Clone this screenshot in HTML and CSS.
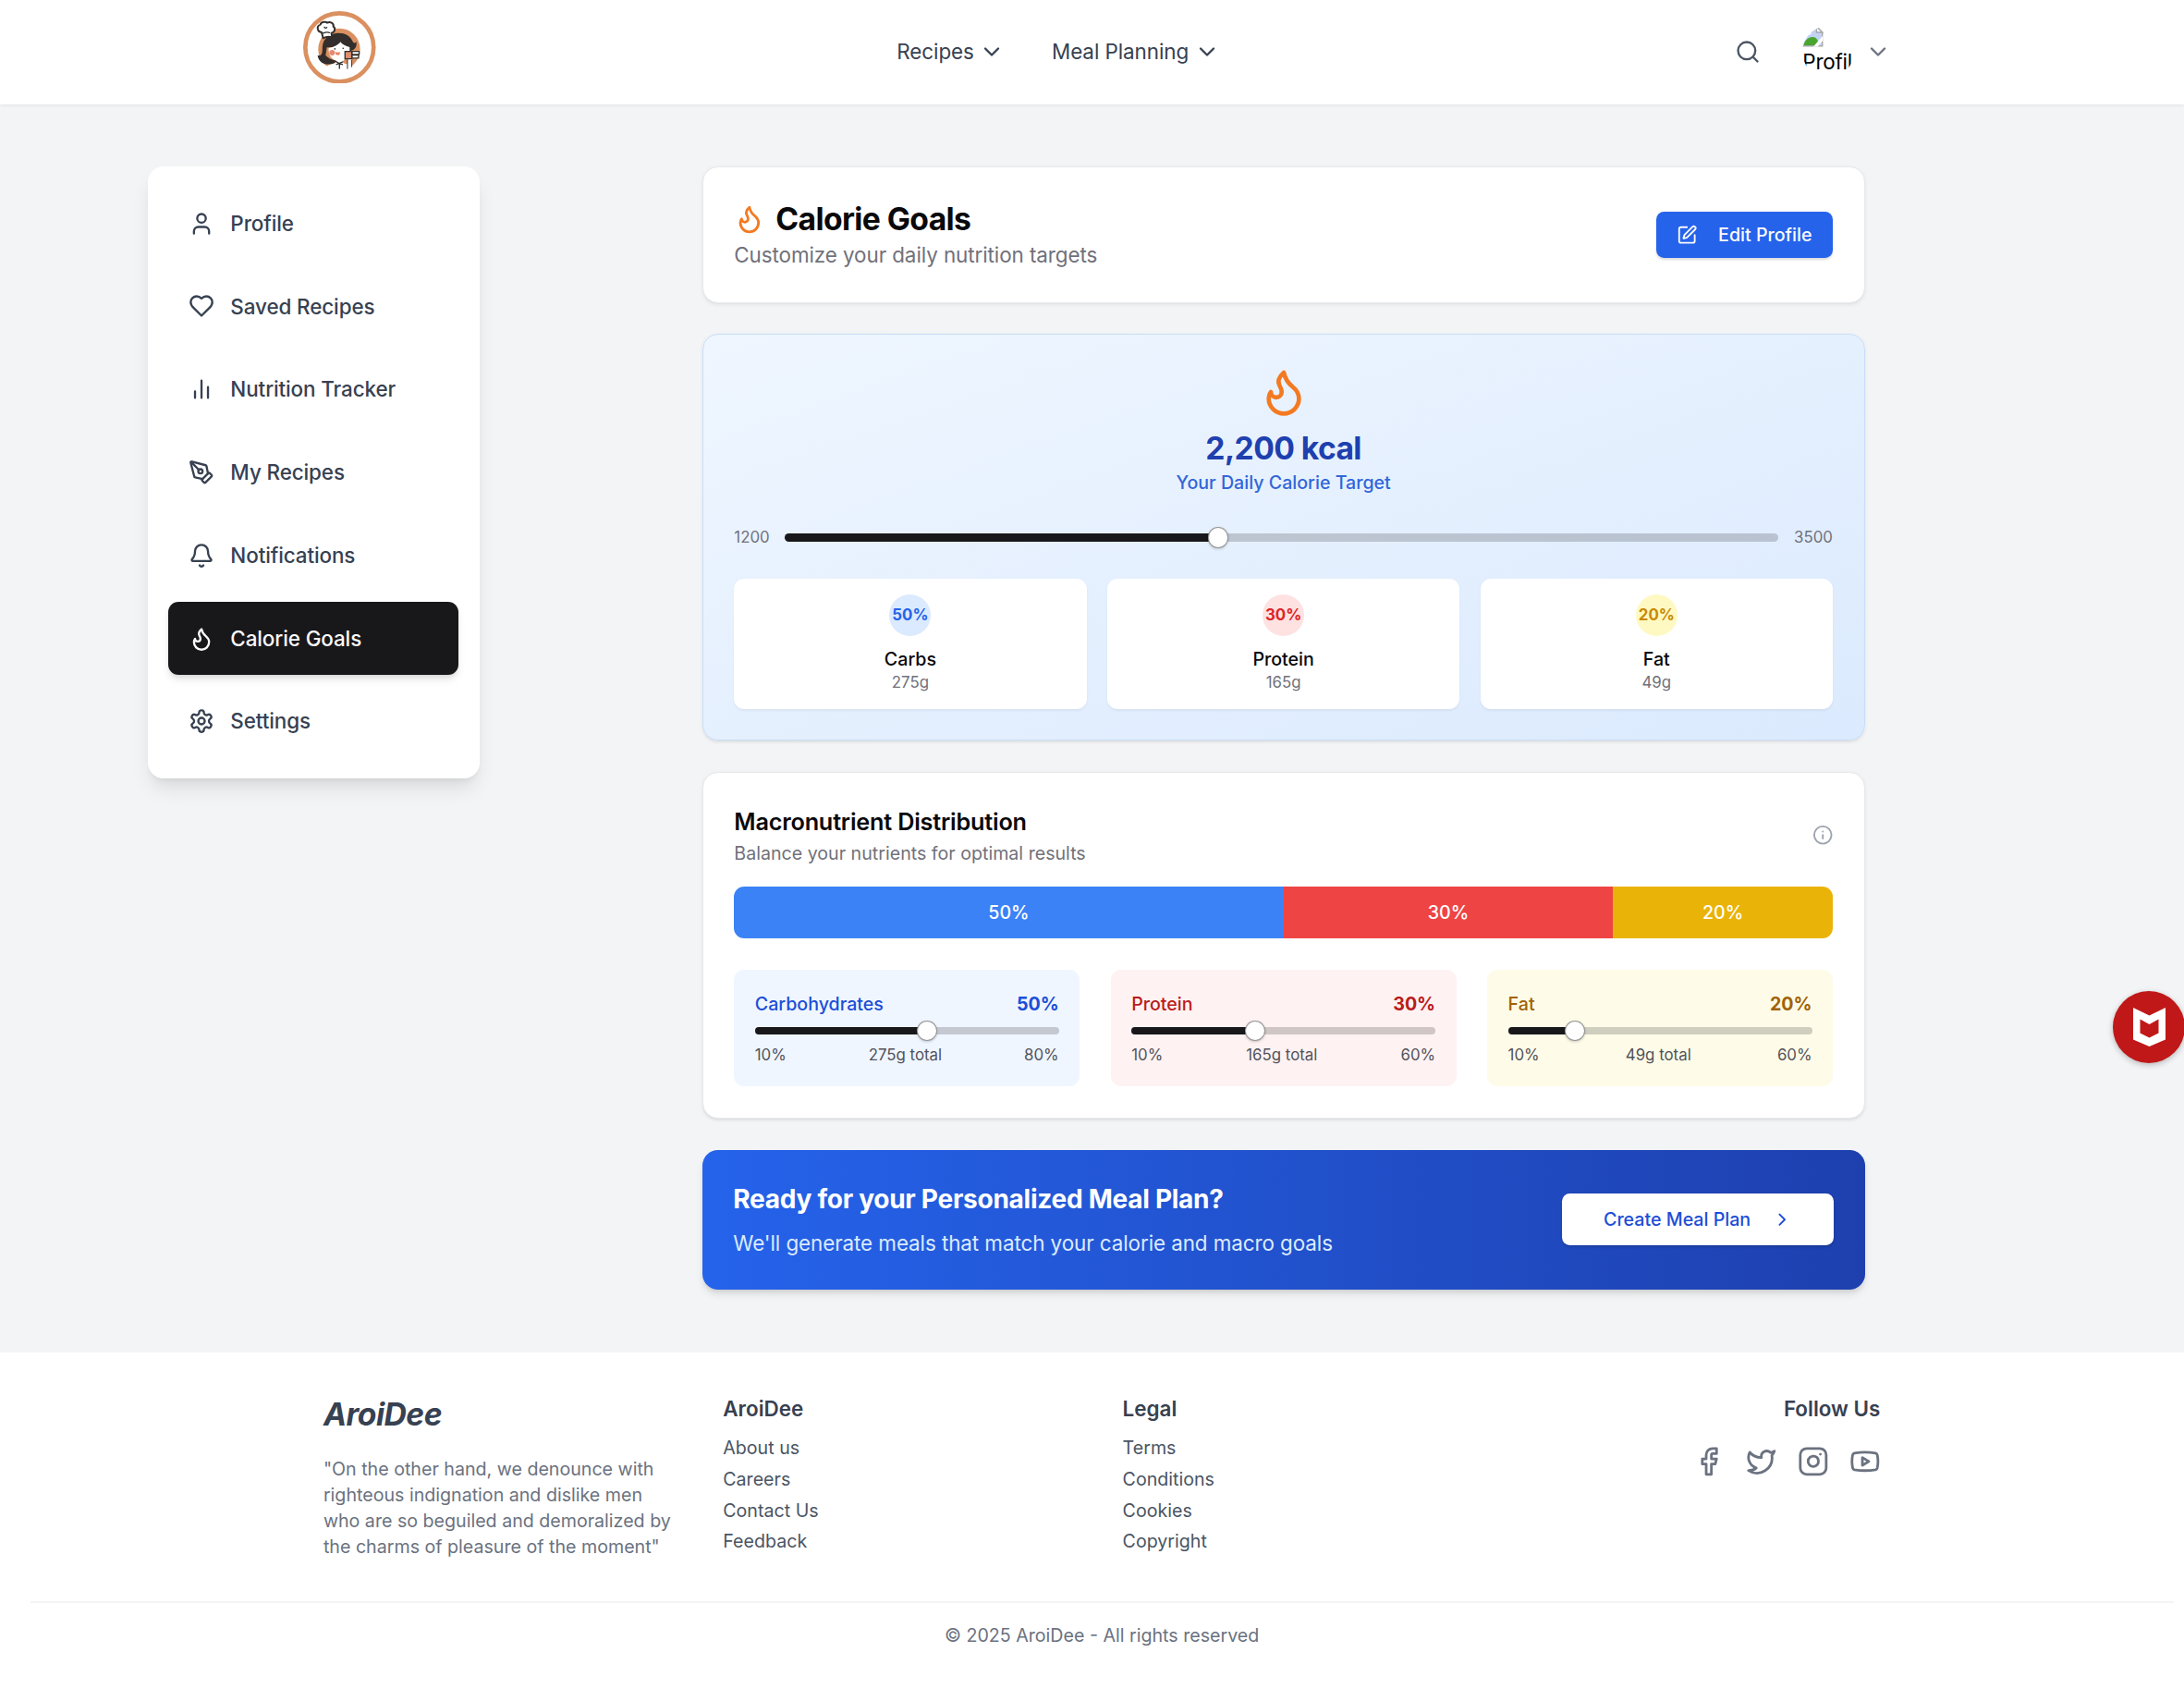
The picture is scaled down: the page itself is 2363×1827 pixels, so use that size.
FILE: index.html
```html
<!DOCTYPE html>
<html lang="en">
<head>
<meta charset="utf-8">
<title>AroiDee - Calorie Goals</title>
<link rel="stylesheet" href="styles.css">
</head>
<body>
<svg class="sprite" aria-hidden="true">
  <symbol id="i-flame" viewBox="0 0 24 24"><path d="M8.5 14.5A2.5 2.5 0 0 0 11 12c0-1.38-.5-2-1-3-1.072-2.143-.224-4.054 2-6 .5 2.5 2 4.9 4 6.5 2 1.6 3 3.5 3 5.5a7 7 0 1 1-14 0c0-1.153.433-2.294 1-3a2.5 2.5 0 0 0 2.5 2.5z"/></symbol>
  <symbol id="i-down" viewBox="0 0 24 24"><path d="m6 9 6 6 6-6"/></symbol>
</svg>

<header class="topbar">
  <div class="topbar-inner">
    <a class="logo" href="#">
      <svg class="logo-img" viewBox="85 36 236 236">
        <circle cx="203" cy="154" r="111" fill="#fff"/>
        <circle cx="202" cy="160" r="68" fill="#da9060"/>
        <path d="M134 224h136v20H134z" fill="#fff"/>
        <path d="M158 222c6-12 22-18 44-18s36 6 42 20c-20 12-66 12-86-2z" fill="#fff"/>
        <path d="M150 140c6-20 26-32 50-33 22 0 38 10 45 26 4 8 8 9 13 2 2 16-4 26-16 29l-6 10-14-20-60 0-4 26c8 8 18 14 32 16l-2 8c-26 12-52 2-56-24 9 2 14-2 15-12 1-12 0-19 3-28z" fill="#332e2b"/>
        <path d="M168 156c16-3 32-10 38-20 6 9 18 14 30 17 2 26-8 45-34 45-22 0-36-18-34-42z" fill="#fff"/>
        <path d="M192 194h24l2 12-14 10-14-10z" fill="#fff"/>
        <path d="M188 198l14 8 14-6M203 206v18M192 210l10-4 12 4" fill="none" stroke="#332e2b" stroke-width="4"/>
        <circle cx="179" cy="171" r="9" fill="#e48a72"/>
        <path d="M189 168q8 4 16 1q0 11-7 10q-9 0-9-11z" fill="#e9825f"/>
        <circle cx="188" cy="159" r="2.500" fill="#332e2b"/><circle cx="215" cy="157" r="2.500" fill="#332e2b"/>
        <path d="M230 192l14-2 1 36-18 2z" fill="#fff"/>
        <path d="M229 194v30M243 194v24" fill="none" stroke="#332e2b" stroke-width="3"/>
        <path d="M221 167h22v24h-22z" fill="#dd8e70" stroke="#332e2b" stroke-width="4"/>
        <path d="M244 167h23v10h-23zM244 179h21v10h-21z" fill="#fff" stroke="#332e2b" stroke-width="4" stroke-linejoin="round"/>
        <path d="M150 124l-5-19c-14-1-18-20-4-25 2-10 18-11 22-6 9-5 23 1 20 12 9 6 4 20-6 21l2 14q-16-4-29 3z" fill="#fff" stroke="#332e2b" stroke-width="6" stroke-linejoin="round"/>
        <path d="M150 108q11-5 21-2M154 88q4 6 8 1" fill="none" stroke="#332e2b" stroke-width="4" stroke-linecap="round"/>
        <circle cx="203" cy="154" r="111" fill="none" stroke="#da9060" stroke-width="14"/>
      </svg>
    </a>
    <nav class="mainnav">
      <a href="#">Recipes <svg class="icon"><use href="#i-down"/></svg></a>
      <a href="#">Meal Planning <svg class="icon"><use href="#i-down"/></svg></a>
    </nav>
    <div class="account">
      <svg class="icon search" viewBox="0 0 24 24"><circle cx="11" cy="11" r="8"/><path d="m21 21-4.300-4.300"/></svg>
      <div class="avatar">
        <svg class="broken" viewBox="0 0 16 16"><path d="M.5.5h10.500l4.500 4.500v10.500h-15z" fill="#c3d3f5" stroke="#a8a8a8"/><path d="M11 .5V5h4.500z" fill="#fff" stroke="#a8a8a8"/><circle cx="5" cy="5" r="2" fill="#fff"/><path d="M1 15c1-4.500 4-6.500 7-6.500 2 0 3.500 1.500 4 3V15z" fill="#4aa52f"/><path d="M8.500 16L16 7.500v3.500l-4 5z" fill="#fff"/></svg>
        <span>Profile</span>
      </div>
      <svg class="icon"><use href="#i-down"/></svg>
    </div>
  </div>
</header>

<div class="page">
  <div class="page-inner">
    <aside class="sidebar">
      <a href="#"><svg class="icon" viewBox="0 0 24 24"><path d="M19 21v-2a4 4 0 0 0-4-4H9a4 4 0 0 0-4 4v2"/><circle cx="12" cy="7" r="4"/></svg>Profile</a>
      <a href="#"><svg class="icon" viewBox="0 0 24 24"><path d="M19 14c1.490-1.460 3-3.210 3-5.500A5.500 5.500 0 0 0 16.500 3c-1.760 0-3 .5-4.500 2-1.500-1.500-2.740-2-4.500-2A5.500 5.500 0 0 0 2 8.500c0 2.300 1.500 4.050 3 5.500l7 7Z"/></svg>Saved Recipes</a>
      <a href="#"><svg class="icon" viewBox="0 0 24 24"><path d="M18 20V10M12 20V4M6 20v-6"/></svg>Nutrition Tracker</a>
      <a href="#"><svg class="icon" viewBox="0 0 24 24"><path d="M15.707 21.293a1 1 0 0 1-1.414 0l-1.586-1.586a1 1 0 0 1 0-1.414l5.586-5.586a1 1 0 0 1 1.414 0l1.586 1.586a1 1 0 0 1 0 1.414z"/><path d="m18 13-1.375-6.874a1 1 0 0 0-.746-.776L3.235 2.028a1 1 0 0 0-1.207 1.207L5.350 15.879a1 1 0 0 0 .776.746L13 18"/><path d="m2.300 2.300 7.286 7.286"/><circle cx="11" cy="11" r="2"/></svg>My Recipes</a>
      <a href="#"><svg class="icon" viewBox="0 0 24 24"><path d="M10.268 21a2 2 0 0 0 3.464 0"/><path d="M3.262 15.326A1 1 0 0 0 4 17h16a1 1 0 0 0 .74-1.673C19.410 13.956 18 12.499 18 8A6 6 0 0 0 6 8c0 4.499-1.411 5.956-2.738 7.326"/></svg>Notifications</a>
      <a href="#" class="active"><svg class="icon"><use href="#i-flame"/></svg>Calorie Goals</a>
      <a href="#"><svg class="icon" viewBox="0 0 24 24"><path d="M12.220 2h-.44a2 2 0 0 0-2 2v.18a2 2 0 0 1-1 1.730l-.43.25a2 2 0 0 1-2 0l-.15-.08a2 2 0 0 0-2.730.73l-.22.38a2 2 0 0 0 .73 2.730l.15.1a2 2 0 0 1 1 1.720v.51a2 2 0 0 1-1 1.740l-.15.09a2 2 0 0 0-.73 2.730l.22.38a2 2 0 0 0 2.730.73l.15-.08a2 2 0 0 1 2 0l.43.25a2 2 0 0 1 1 1.730V20a2 2 0 0 0 2 2h.44a2 2 0 0 0 2-2v-.18a2 2 0 0 1 1-1.730l.43-.25a2 2 0 0 1 2 0l.15.08a2 2 0 0 0 2.730-.73l.22-.39a2 2 0 0 0-.73-2.730l-.15-.08a2 2 0 0 1-1-1.740v-.5a2 2 0 0 1 1-1.740l.15-.09a2 2 0 0 0 .73-2.730l-.22-.38a2 2 0 0 0-2.730-.73l-.15.08a2 2 0 0 1-2 0l-.43-.25a2 2 0 0 1-1-1.730V4a2 2 0 0 0-2-2z"/><circle cx="12" cy="12" r="3"/></svg>Settings</a>
    </aside>

    <main class="content">
      <section class="card headcard">
        <div>
          <h1><svg class="icon flame"><use href="#i-flame"/></svg>Calorie Goals</h1>
          <p>Customize your daily nutrition targets</p>
        </div>
        <button class="btn btn-primary"><svg class="icon" viewBox="0 0 24 24"><path d="M12 3H5a2 2 0 0 0-2 2v14a2 2 0 0 0 2 2h14a2 2 0 0 0 2-2v-7"/><path d="M18.375 2.625a1 1 0 0 1 3 3l-9.013 9.014a2 2 0 0 1-.853.505l-2.873.84a.5.5 0 0 1-.62-.62l.84-2.873a2 2 0 0 1 .506-.852z"/></svg>Edit Profile</button>
      </section>

      <section class="card target">
        <svg class="icon flame big"><use href="#i-flame"/></svg>
        <div class="kcal">2,200 kcal</div>
        <div class="kcal-sub">Your Daily Calorie Target</div>
        <div class="range">
          <span>1200</span>
          <div class="slider" style="--p:.43478"><i class="fill"></i><i class="thumb"></i></div>
          <span>3500</span>
        </div>
        <div class="macros">
          <div class="macro"><b class="c-blue">50%</b><strong>Carbs</strong><small>275g</small></div>
          <div class="macro"><b class="c-red">30%</b><strong>Protein</strong><small>165g</small></div>
          <div class="macro"><b class="c-yellow">20%</b><strong>Fat</strong><small>49g</small></div>
        </div>
      </section>

      <section class="card dist">
        <div class="dist-head">
          <div><h2>Macronutrient Distribution</h2><p>Balance your nutrients for optimal results</p></div>
          <svg class="icon" viewBox="0 0 24 24"><circle cx="12" cy="12" r="10"/><path d="M12 16v-4M12 8h.01"/></svg>
        </div>
        <div class="bar">
          <div class="seg-blue" style="width:50%">50%</div><div class="seg-red" style="width:30%">30%</div><div class="seg-yellow" style="width:20%">20%</div>
        </div>
        <div class="boxes">
          <div class="box box-blue">
            <div class="row label"><span>Carbohydrates</span><b>50%</b></div>
            <div class="slider" style="--p:.5714"><i class="fill"></i><i class="thumb"></i></div>
            <div class="row ends"><span>10%</span><span>275g total</span><span>80%</span></div>
          </div>
          <div class="box box-red">
            <div class="row label"><span>Protein</span><b>30%</b></div>
            <div class="slider" style="--p:.4"><i class="fill"></i><i class="thumb"></i></div>
            <div class="row ends"><span>10%</span><span>165g total</span><span>60%</span></div>
          </div>
          <div class="box box-yellow">
            <div class="row label"><span>Fat</span><b>20%</b></div>
            <div class="slider" style="--p:.2"><i class="fill"></i><i class="thumb"></i></div>
            <div class="row ends"><span>10%</span><span>49g total</span><span>60%</span></div>
          </div>
        </div>
      </section>

      <section class="banner">
        <div><h3>Ready for your Personalized Meal Plan?</h3><p>We'll generate meals that match your calorie and macro goals</p></div>
        <button class="btn btn-white">Create Meal Plan<svg class="icon" viewBox="0 0 24 24"><path d="m9 18 6-6-6-6"/></svg></button>
      </section>
    </main>
  </div>
</div>

<footer class="footer">
  <div class="footer-cols">
    <div><div class="brand">AroiDee</div><p class="quote">"On the other hand, we denounce with righteous indignation and dislike men who are so beguiled and demoralized by the charms of pleasure of the moment"</p></div>
    <div><h4>AroiDee</h4><ul><li>About us</li><li>Careers</li><li>Contact Us</li><li>Feedback</li></ul></div>
    <div><h4>Legal</h4><ul><li>Terms</li><li>Conditions</li><li>Cookies</li><li>Copyright</li></ul></div>
    <div class="follow">
      <h4>Follow Us</h4>
      <div class="social">
        <svg class="icon" viewBox="0 0 24 24"><path d="M18 2h-3a5 5 0 0 0-5 5v3H7v4h3v8h4v-8h3l1-4h-4V7a1 1 0 0 1 1-1h3z"/></svg>
        <svg class="icon" viewBox="0 0 24 24"><path d="M22 4s-.7 2.100-2 3.400c1.600 10-9.400 17.300-18 11.600 2.200.1 4.400-.6 6-2C3 15.500.5 9.600 3 5c2.200 2.600 5.600 4.100 9 4-.9-4.200 4-6.600 7-3.800 1.100 0 3-1.200 3-1.200z"/></svg>
        <svg class="icon" viewBox="0 0 24 24"><rect x="2" y="2" width="20" height="20" rx="5"/><path d="M16 11.370A4 4 0 1 1 12.630 8 4 4 0 0 1 16 11.370zM17.500 6.500h.01"/></svg>
        <svg class="icon" viewBox="0 0 24 24"><path d="M2.500 17a24.120 24.120 0 0 1 0-10 2 2 0 0 1 1.400-1.400 49.560 49.560 0 0 1 16.200 0A2 2 0 0 1 21.500 7a24.120 24.120 0 0 1 0 10 2 2 0 0 1-1.400 1.400 49.550 49.550 0 0 1-16.200 0A2 2 0 0 1 2.500 17"/><path d="m10 15 5-3-5-3z"/></svg>
      </div>
    </div>
  </div>
  <div class="copyright">© 2025 AroiDee - All rights reserved</div>
</footer>

<div class="shield">
  <svg viewBox="0 0 35 42"><path fill="#fff" fill-rule="evenodd" d="M0 0l17.500 8.500L35 0v34.500L17.500 42 0 34.500zM7.500 12.500v15l10 5 10-5v-15l-10 5.500z"/></svg>
</div>
</body>
</html>
```
FILE: styles.css
```css
html { font-size: 22.448px; }
* { box-sizing: border-box; margin: 0; padding: 0; }
body { font-family: Inter, "Liberation Sans", sans-serif; font-size: 1rem; line-height: 1.5rem; color: #09090b; background: #fff; overflow-x: hidden; }
a { color: inherit; text-decoration: none; }
ul { list-style: none; }
.sprite { position: absolute; width: 0; height: 0; }
.icon { width: 1.25rem; height: 1.25rem; flex: none; fill: none; stroke: currentColor; stroke-width: 2; stroke-linecap: round; stroke-linejoin: round; }

.topbar { position: relative; height: 5.015rem; background: #fff; box-shadow: 0 1px 3px rgba(0,0,0,.08); }
.topbar-inner { width: 77rem; height: 5rem; margin: 0 auto; display: flex; align-items: center; justify-content: space-between; }
.logo { width: 4.75rem; padding: 0 0 .45rem .5rem; display: flex; }
.logo-img { width: 3.5rem; height: 3.5rem; }
.mainnav { display: flex; gap: 2.25rem; color: #374151; letter-spacing: -.004em; }
.mainnav a { display: flex; align-items: center; gap: .25rem; }
.account { display: flex; align-items: center; padding-left: .5rem; color: #6b7280; }
.search { color: #4b5563; margin-right: 2rem; }
.avatar { width: 2.5rem; height: 2.5rem; border-radius: 50%; overflow: hidden; margin-right: .5rem; color: #000; letter-spacing: -.01em; }
.avatar span { display: block; line-height: 1.46rem; }
.broken { display: block; width: 1rem; height: 1rem; }

.page { background: #f3f4f6; padding: 3rem 1px 3rem 0; }
.page-inner { width: 91rem; margin: 0 auto; display: flex; align-items: flex-start; gap: 2.5rem; }
.sidebar { width: 16rem; padding: 1rem; display: flex; flex-direction: column; gap: .5rem; background: #fff; border-radius: .75rem; box-shadow: 0 .625rem .9375rem -.1875rem rgba(0,0,0,.1), 0 .25rem .375rem -.25rem rgba(0,0,0,.1); }
.sidebar a { height: 3.5rem; padding: 0 1rem; display: flex; align-items: center; gap: .75rem; border-radius: .5rem; font-weight: 500; letter-spacing: -.005em; color: #374151; }
.sidebar .active { background: #18181b; color: #fafafa; box-shadow: 0 .25rem .375rem -.0625rem rgba(0,0,0,.1), 0 .125rem .25rem -.125rem rgba(0,0,0,.1); }
.content { width: 56.04rem; margin: 0 auto; display: flex; flex-direction: column; gap: 1.5rem; }

.card { background: #fff; border: 1px solid #e8e9ec; border-radius: .75rem; padding: 1.5rem; box-shadow: 0 .0625rem .1875rem rgba(0,0,0,.06), 0 .0625rem .125rem -.0625rem rgba(0,0,0,.06); }
.headcard { display: flex; align-items: center; justify-content: space-between; }
h1 { display: flex; align-items: center; gap: .5rem; font-size: 1.5rem; line-height: 2rem; font-weight: 700; letter-spacing: -.018em; }
.flame { color: #f37a21; width: 1.5rem; height: 1.5rem; }
.headcard p { color: #71717a; letter-spacing: -.004em; }
.btn { display: flex; align-items: center; gap: 1rem; border: 0; border-radius: .375rem; font: 500 .875rem/1.25rem Inter, sans-serif; box-shadow: 0 .0625rem .125rem rgba(0,0,0,.15); }
.btn .icon { width: 1rem; height: 1rem; }
.btn-primary { height: 2.25rem; padding: 0 1rem; background: #2563eb; color: #fafafa; }
.btn-white { height: 2.5rem; padding: 0 2rem; background: #fff; color: #1d4ed8; }

.target { display: flex; flex-direction: column; background: linear-gradient(to bottom right, #eff6ff, #dbeafe); border-color: #c9def8; text-align: center; }
.big { width: 2.5rem; height: 2.5rem; align-self: center; margin-bottom: .5rem; }
.kcal { font-size: 1.5rem; line-height: 2rem; font-weight: 700; letter-spacing: -.018em; color: #1e40af; }
.kcal-sub { font-size: .875rem; line-height: 1.25rem; font-weight: 500; color: #3366d9; }
.range { display: flex; align-items: center; gap: .75rem; margin: 1.5rem 0; height: 1rem; font-size: .75rem; color: #71717a; }
.range .slider { flex: 1; }
.slider { position: relative; height: .375rem; border-radius: 1rem; background: rgba(24,24,27,.2); }
.fill { position: absolute; left: 0; top: 0; height: 100%; width: calc(var(--p) * 100%); background: #18181b; border-radius: 1rem 0 0 1rem; }
.thumb { position: absolute; left: calc(var(--p) * (100% - 1rem)); top: -.3125rem; width: 1rem; height: 1rem; border-radius: 50%; background: #fff; border: 1px solid rgba(24,24,27,.45); box-shadow: 0 1px 3px rgba(0,0,0,.2); }
.macros { display: grid; grid-template-columns: repeat(3, 1fr); gap: 1rem; }
.macro { display: flex; flex-direction: column; align-items: center; padding: .75rem; background: #fff; border-radius: .5rem; box-shadow: 0 .0625rem .125rem rgba(0,0,0,.05); }
.macro b { width: 2rem; height: 2rem; border-radius: 50%; margin-bottom: .5rem; font-size: .75rem; line-height: 2rem; }
.macro strong { font-size: .875rem; line-height: 1.25rem; font-weight: 500; }
.macro small { font-size: .75rem; line-height: 1rem; color: #71717a; }
.c-blue { background: #dbeafe; color: #2563eb; }
.c-red { background: #fee2e2; color: #dc2626; }
.c-yellow { background: #fef9c3; color: #ca8a04; }

.dist-head { display: flex; align-items: center; justify-content: space-between; }
h2 { font-size: 1.125rem; line-height: 1.75rem; font-weight: 600; letter-spacing: -.008em; }
.dist-head p { font-size: .875rem; line-height: 1.25rem; color: #71717a; }
.dist-head .icon { width: 1rem; height: 1rem; color: #9ca3af; }
.bar { display: flex; height: 2.5rem; margin: 1rem 0 1.5rem; border-radius: .5rem; overflow: hidden; color: #fff; font-size: .875rem; line-height: 2.5rem; font-weight: 500; text-align: center; }
.seg-blue { background: #3b82f6; }
.seg-red { background: #ef4444; }
.seg-yellow { background: #eab308; }
.boxes { display: grid; grid-template-columns: repeat(3, 1fr); gap: 1.5rem; }
.box { padding: 1rem; border-radius: .5rem; }
.row { display: flex; justify-content: space-between; }
.label { font-size: .875rem; line-height: 1.25rem; font-weight: 500; margin-bottom: .5rem; }
.ends { font-size: .75rem; line-height: 1rem; color: #52525b; margin-top: .5rem; }
.box-blue { background: #eff6ff; }
.box-blue .label { color: #1d4ed8; }
.box-red { background: #fef2f2; }
.box-red .label { color: #b91c1c; }
.box-yellow { background: #fefce8; }
.box-yellow .label { color: #a16207; }

.banner { display: flex; align-items: center; justify-content: space-between; padding: 1.5rem; border-radius: .75rem; background: linear-gradient(to right, #2563eb, #1e40af); color: #fff; box-shadow: 0 .25rem .375rem -.0625rem rgba(0,0,0,.1), 0 .125rem .25rem -.125rem rgba(0,0,0,.1); }
h3 { padding-top: 1px; font-size: 1.25rem; line-height: 1.75rem; font-weight: 700; letter-spacing: -.01em; margin-bottom: calc(.5rem - 1px); }
.banner p { color: #dbeafe; letter-spacing: -.004em; }

.footer { padding: 2rem .5rem 0 1.45rem; background: #fff; color: #374151; }
.footer-cols { width: 75.04rem; margin: 0 auto 2rem; display: grid; grid-template-columns: repeat(4, 1fr); gap: 2rem; }
.brand { padding-top: 1px; font-size: 1.5rem; line-height: 2rem; font-weight: 700; font-style: italic; letter-spacing: -.016em; margin-bottom: calc(1rem - 1px); }
.quote { font-size: .875rem; line-height: 1.25rem; color: #6b7280; }
h4 { font-size: 1rem; line-height: 1.5rem; font-weight: 600; margin-bottom: .5rem; }
.footer ul { display: flex; flex-direction: column; gap: .25rem; font-size: .875rem; line-height: 1.25rem; color: #4b5563; }
.follow { text-align: right; }
.social { display: flex; justify-content: flex-end; gap: 1rem; padding-top: .5rem; color: #6b7280; }
.social .icon { width: 1.5rem; height: 1.5rem; }
.copyright { border-top: 2px solid #f3f4f6; padding-top: calc(1rem - 1px); text-align: center; font-size: .875rem; line-height: 1.25rem; color: #6b7280; }

.shield { position: absolute; right: -1px; top: 1072px; width: 78px; height: 78px; border-radius: 50%; background: #c01818; display: flex; align-items: center; justify-content: center; box-shadow: 0 2px 6px rgba(0,0,0,.25); }
.shield svg { width: 35px; height: 42px; }
```
